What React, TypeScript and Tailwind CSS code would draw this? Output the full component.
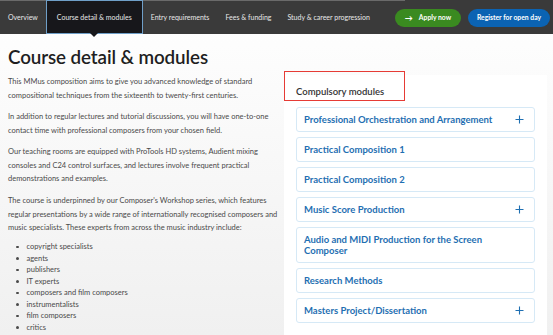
import React from "react";

const modules: { name: string; plus: boolean }[] = [
  { name: "Professional Orchestration and Arrangement", plus: true },
  { name: "Practical Composition 1", plus: false },
  { name: "Practical Composition 2", plus: false },
  { name: "Music Score Production", plus: true },
  { name: "Audio and MIDI Production for the Screen Composer", plus: false },
  { name: "Research Methods", plus: false },
  { name: "Masters Project/Dissertation", plus: true },
];

const list = [
  "copyright specialists",
  "agents",
  "publishers",
  "IT experts",
  "composers and film composers",
  "instrumentalists",
  "film composers",
  "critics",
];

function Plus() {
  return (
    <svg width="9" height="9" viewBox="0 0 9 9" className="shrink-0">
      <path d="M4.5 0.5v8M0.5 4.5h8" stroke="#1f6fb2" strokeWidth="1.1" />
    </svg>
  );
}

export default function App() {
  return (
    <div
      className="w-[553px] h-[335px] overflow-hidden bg-gradient-to-b from-white to-[#f0f0f0] text-[#444]"
      style={{ fontFamily: "Lato, 'Open Sans', sans-serif" }}
    >
      <div className="bg-[#3a3a3a]">
        <div className="h-px w-[405px] bg-[#6a6a6a]" />
        <div className="h-[33px] flex items-stretch text-[7px] text-[#e8e8e8]">
          <div className="px-[8px] flex items-center">Overview</div>
          <div className="relative px-[10px] flex items-center bg-[#17171b] border border-[#6f9fc8] -mt-px">
            Course detail &amp; modules
            <div className="absolute left-1/2 -translate-x-1/2 -bottom-[4px] w-0 h-0 border-l-[4px] border-r-[4px] border-t-[4px] border-l-transparent border-r-transparent border-t-[#17171b]" />
          </div>
          <div className="px-[8px] flex items-center">Entry requirements</div>
          <div className="px-[8px] flex items-center">Fees &amp; funding</div>
          <div className="px-[8px] flex items-center">Study &amp; career progression</div>
          <div className="flex-1" />
          <div className="flex items-center gap-[7px] mr-[3px]">
            <div className="h-[18px] w-[66px] rounded-full bg-[#3a8a20] flex items-center justify-center gap-[6px] font-bold text-white text-[6.8px]">
              <span className="text-[8px] leading-none">→</span>
              <span>Apply now</span>
            </div>
            <div className="h-[18px] w-[82px] rounded-full bg-[#0b63b3] flex items-center justify-center font-bold text-white text-[6.8px]">
              Register for open day
            </div>
          </div>
        </div>
      </div>

      <div className="flex">
        <div className="w-[284px] pl-[8px]">
          <h1 className="mt-[11px] text-[18.8px] leading-[24px] font-semibold text-[#1e1e22] tracking-[-0.1px]">
            Course detail &amp; modules
          </h1>
          <div className="mt-[6px] text-[7.5px] leading-[13.5px] text-[#4a4a4a]">
            <p>
              This MMus composition aims to give you advanced knowledge of standard
              compositional techniques from the sixteenth to twenty-first centuries.
            </p>
            <p className="mt-[8px]">
              In addition to regular lectures and tutorial discussions, you will have one-to-one
              contact time with professional composers from your chosen field.
            </p>
            <p className="mt-[8px]">
              Our teaching rooms are equipped with ProTools HD systems, Audient mixing
              consoles and C24 control surfaces, and lectures involve frequent practical
              demonstrations and examples.
            </p>
            <p className="mt-[8.5px]">
              The course is underpinned by our Composer's Workshop series, which features
              regular presentations by a wide range of internationally recognised composers
              and music specialists. These experts from across the music industry include:
            </p>
            <ul className="mt-[6.5px] leading-[11.5px]">
              {list.map((t) => (
                <li key={t} className="flex items-center">
                  <span className="ml-[8px] mr-[8px] w-[2.5px] h-[2.5px] rounded-full bg-[#4a4a4a]" />
                  {t}
                </li>
              ))}
            </ul>
          </div>
        </div>

        <div className="relative">
          <div className="mt-[41px] w-[263px] bg-white px-[12px] pt-[11px] pb-[12px]">
            <div className="text-[9.5px] leading-[12px] font-semibold text-[#333]">
              Compulsory modules
            </div>
            <div className="mt-[9px] flex flex-col gap-[5px]">
              {modules.map((m) => (
                <div
                  key={m.name}
                  className="border border-[#d6e9f6] rounded-[3px] pl-[7px] pr-[10px] py-[6px] flex items-center justify-between"
                >
                  <span className="max-w-[205px] text-[9.5px] leading-[11px] font-bold text-[#1f6fb2]">
                    {m.name}
                  </span>
                  {m.plus && <Plus />}
                </div>
              ))}
            </div>
          </div>
          <div className="absolute left-0 top-[37px] w-[121px] h-[30px] border-[1.5px] border-[#e63b35]" />
        </div>
      </div>
    </div>
  );
}
